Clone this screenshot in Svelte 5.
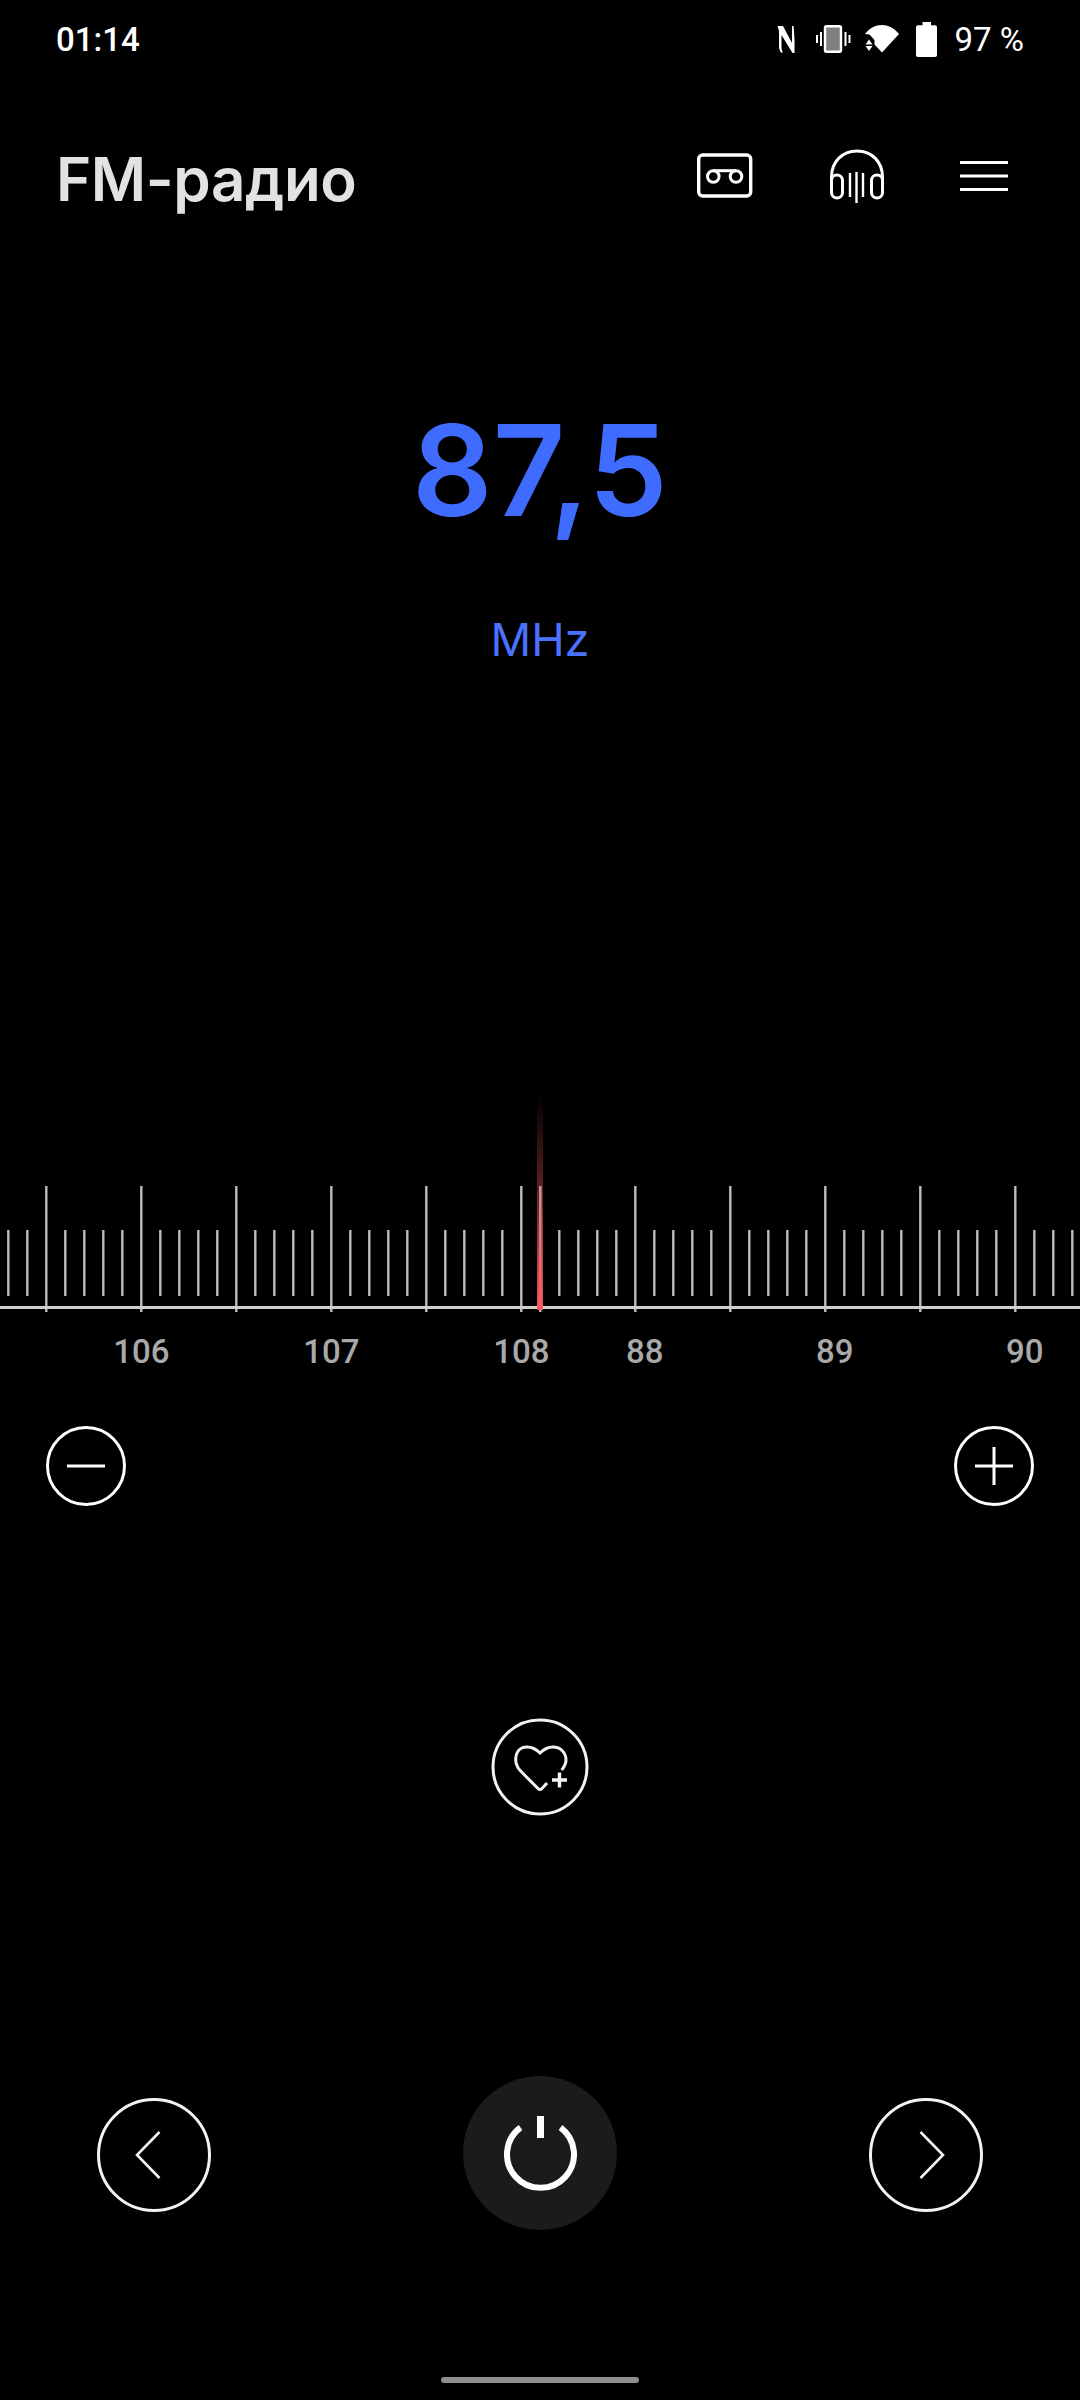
<script>
  const step = 19;
  const ticks = [];
  // dial wraps from 108 to 87.5 at tick 28, so each side counts its long ticks on its own
  for (let i = 0; i <= 56; i++) {
    const long = i < 28 ? (i - 2) % 5 === 0 : (i - 28) % 5 === 0;
    ticks.push({ x: 8.3 + i * step, long });
  }

  const labels = [
    { text: "106", x: 141.3 },
    { text: "107", x: 331.3 },
    { text: "108", x: 521.3 },
    { text: "88", x: 644.7 },
    { text: "89", x: 834.7 },
    { text: "90", x: 1024.7 },
  ];
</script>

<div class="screen">
  <div class="status">
    <span>01:14</span>
    <div class="status-right">
      <svg class="nfc" width="18" height="27" viewBox="0 0 18 27" fill="#fff">
        <path d="M0.500 0 H6 L15 17 V0 H16.500 C17.500 8 17.800 18 17.500 27 H15.500 L4.500 9 V21 C4.500 23 5 25 6 26.500 H4 C2.500 24.500 2 22 2 20 V5 Z" />
      </svg>
      <svg class="vib" width="35" height="28" viewBox="0 0 35 28" fill="none">
        <rect x="9" y="1.200" width="16" height="25.600" rx="1.500" fill="#808080" stroke="#fff" stroke-width="2.400" />
        <path d="M1 10 V18 M5 7 V21 M29.500 7 V21 M33.500 10 V18" stroke="#fff" stroke-width="2" />
      </svg>
      <svg class="wifi" width="34" height="28" viewBox="0 0 34 28">
        <path d="M0 9 C9 -3 24.500 -3 34 9 L17 27.500 L9.500 19.500 L9.500 15 L4.500 9.500 Z" fill="#fff" />
        <path d="M4 14.500 L0.500 19.500 H7.500 Z M0.500 21 H7.500 L4 26 Z" fill="#fff" />
      </svg>
      <svg class="batt" width="21" height="35" viewBox="0 0 21 35">
        <path d="M6.500 0 H15 V3.200 H19 C20.200 3.200 21 4 21 5.200 V33 C21 34.200 20.200 35 19 35 H2 C0.800 35 0 34.200 0 33 V5.200 C0 4 0.800 3.200 2 3.200 H6.500 Z" fill="#fff" />
      </svg>
      <span class="pct">97 %</span>
    </div>
  </div>

  <header>
    <h1>FM-радио</h1>
    <div class="actions">
      <svg width="58" height="46" viewBox="0 0 58 46" fill="none" stroke="#fff" stroke-width="3.400">
        <rect x="2.700" y="2" width="52" height="41" rx="4" />
        <circle cx="17.300" cy="23.500" r="5.800" stroke-width="3" />
        <circle cx="40" cy="23.500" r="5.800" stroke-width="3" />
        <path d="M17.300 17.700 H40" stroke-width="3" />
      </svg>
      <svg width="58" height="54" viewBox="0 0 58 54" fill="none" stroke="#fff" stroke-width="3">
        <path d="M3.500 31 V28 C3.500 13 14 2 29 2 C44 2 54.500 13 54.500 28 V31" />
        <rect x="3.500" y="26" width="11" height="23" rx="5.500" />
        <rect x="43.500" y="26" width="11" height="23" rx="5.500" />
        <path d="M22 24 V48 M28.500 23 V54 M35 24 V48" stroke-width="2.400" />
      </svg>
      <svg width="48" height="32" viewBox="0 0 48 32" fill="none" stroke="#fff" stroke-width="3.200">
        <path d="M0 2.500 H48 M0 16 H48 M0 29.500 H48" />
      </svg>
    </div>
  </header>

  <div class="freq">87,5</div>
  <div class="unit">MHz</div>

  <div class="dial">
    <svg width="1080" height="220" viewBox="0 1095 1080 220">
      <defs>
        <linearGradient id="needle" x1="0" y1="0" x2="0" y2="1">
          <stop offset="0" stop-color="#f5585c" stop-opacity="0" />
          <stop offset="0.42" stop-color="#f5585c" stop-opacity="0.36" />
          <stop offset="1" stop-color="#f5585c" />
        </linearGradient>
      </defs>
      {#each ticks as t}
        <line
          x1={t.x}
          x2={t.x}
          y1={t.long ? 1186 : 1230}
          y2={t.long ? 1312 : 1296}
          stroke="#bdbdbd"
          stroke-width="2.400"
        />
      {/each}
      <rect x="0" y="1306" width="1080" height="3" fill="#cfcfcf" />
      <rect x="537" y="1095" width="6" height="215" rx="1" fill="url(#needle)" />
    </svg>
    <div class="labels">
      {#each labels as l}
        <span style="left: {l.x}px">{l.text}</span>
      {/each}
    </div>
  </div>

  <div class="steppers">
    <button aria-label="minus">
      <svg width="80" height="80" viewBox="0 0 80 80" fill="none" stroke="#fff" stroke-width="3">
        <circle cx="40" cy="40" r="38.500" />
        <path d="M21 40 H59" />
      </svg>
    </button>
    <button aria-label="plus">
      <svg width="80" height="80" viewBox="0 0 80 80" fill="none" stroke="#fff" stroke-width="3">
        <circle cx="40" cy="40" r="38.500" />
        <path d="M21 40 H59 M40 21 V59" />
      </svg>
    </button>
  </div>

  <div class="fav">
    <svg width="98" height="98" viewBox="0 0 98 98" fill="none" stroke="#f2f2f2" stroke-width="3">
      <circle cx="49" cy="49" r="47" />
      <path d="M70.700 52 C73.500 48.500 75 45.500 75 42 C75 34.500 69.500 29 62 29 C56.500 29 52 32 49 35 C46 32 41.500 29 36 29 C28.500 29 24.700 34.500 24.700 42 C24.700 48 28 51.500 32 55.500 L47 70.500 C48.200 71.700 49.800 71.700 51 70.500 L56 65" />
      <path d="M68.500 54.500 V69.500 M61 62 H76" stroke-width="3.400" />
    </svg>
  </div>

  <div class="transport">
    <button class="side" aria-label="previous">
      <svg width="114" height="114" viewBox="0 0 114 114" fill="none" stroke="#f2f2f2" stroke-width="3">
        <circle cx="57" cy="57" r="55.500" />
        <path d="M62.500 34 L40 57 L62.500 80" stroke-width="2.600" />
      </svg>
    </button>
    <button class="power" aria-label="power">
      <svg width="73" height="75" viewBox="0 0 73 75" fill="none" stroke="#fff" stroke-width="6">
        <path d="M16.500 11.500 A33.500 33.500 0 1 0 56.500 11.500" />
        <path d="M36.500 0 V22" stroke-width="7" />
      </svg>
    </button>
    <button class="side" aria-label="next">
      <svg width="114" height="114" viewBox="0 0 114 114" fill="none" stroke="#f2f2f2" stroke-width="3">
        <circle cx="57" cy="57" r="55.500" />
        <path d="M51.500 34 L74 57 L51.500 80" stroke-width="2.600" />
      </svg>
    </button>
  </div>

  <div class="home"></div>
</div>

<style>
  :global(body) {
    background: #000;
  }

  .screen {
    width: 1080px;
    height: 2400px;
    background: #000;
    color: #fff;
    font-family: Inter, Roboto, sans-serif;
    overflow: hidden;
    display: flex;
    flex-direction: column;
  }

  svg {
    display: block;
    flex: none;
  }

  button {
    background: none;
    border: 0;
    padding: 0;
    display: block;
  }

  .status {
    height: 78px;
    padding: 0 56px;
    display: flex;
    align-items: center;
    justify-content: space-between;
    font-family: Roboto, sans-serif;
    font-size: 33px;
    font-weight: 500;
  }

  .status-right {
    display: flex;
    align-items: center;
  }

  .nfc {
    margin-right: 21px;
  }

  .vib {
    margin-right: 14px;
  }

  .wifi {
    margin-right: 17px;
  }

  .batt {
    margin-right: 18px;
  }

  .pct {
    font-weight: 400;
  }

  header {
    margin-top: 62px;
    height: 80px;
    padding: 0 70px 0 56px;
    display: flex;
    align-items: center;
    justify-content: space-between;
  }

  h1 {
    margin: 0 0 2px;
    font-size: 60px;
    font-weight: 600;
    letter-spacing: -0.4px;
    color: #e2e2e2;
  }

  .actions {
    display: flex;
    align-items: center;
    gap: 74px;
    margin-bottom: 8px;
    margin-right: 2px;
  }

  .freq {
    margin-top: 175px;
    text-align: center;
    font-size: 126px;
    font-weight: 600;
    line-height: 150px;
    color: #3f6bff;
  }

  .unit {
    margin-top: 69px;
    text-align: center;
    font-size: 45px;
    line-height: 52px;
    color: #4a72ff;
  }

  .dial {
    position: relative;
    margin-top: 429px;
    height: 290px;
  }

  .labels span {
    position: absolute;
    top: 237px;
    transform: translateX(-50%);
    font-family: Roboto, sans-serif;
    font-size: 33px;
    line-height: 40px;
    font-weight: 500;
    color: #a9a9a9;
  }

  .steppers {
    margin-top: 41px;
    padding: 0 46px;
    display: flex;
    justify-content: space-between;
  }

  .fav {
    margin-top: 212px;
    display: flex;
    justify-content: center;
  }

  .transport {
    margin-top: 260px;
    height: 154px;
    padding: 0 97px;
    display: flex;
    align-items: center;
    justify-content: space-between;
  }

  .side {
    margin-top: 4px;
  }

  .power {
    width: 154px;
    height: 154px;
    border-radius: 50%;
    background: #1b1b1b;
    display: flex;
    align-items: center;
    justify-content: center;
  }

  .home {
    margin: 147px 0 0 441px;
    width: 198px;
    height: 6px;
    border-radius: 3px;
    background: #8f8f8f;
  }
</style>
